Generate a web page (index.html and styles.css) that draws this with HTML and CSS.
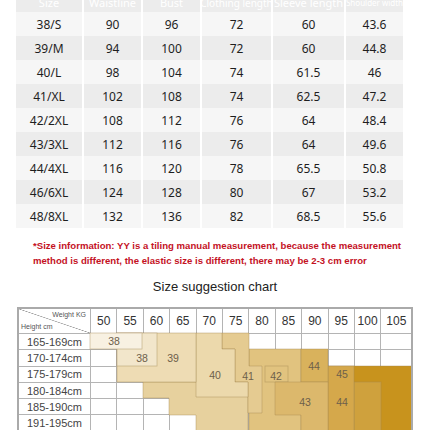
FILE: index.html
```html
<!DOCTYPE html>
<html lang="en">
<head>
    <meta charset="UTF-8">
    <meta name="viewport" content="width=device-width, initial-scale=1.0">
    <title>Size chart</title>
    <link rel="stylesheet" href="styles.css">
</head>
<body>
    <div class="size-table">
        <div class="row head">
            <div>Size</div><div>Waistline</div><div>Bust</div><div class="narrow">Clothing length</div><div>Sleeve length</div><div class="tiny">Shoulder width</div>
        </div>
        <div class="row"><div>38/S</div><div>90</div><div>96</div><div>72</div><div>60</div><div>43.6</div></div>
        <div class="row"><div>39/M</div><div>94</div><div>100</div><div>72</div><div>60</div><div>44.8</div></div>
        <div class="row"><div>40/L</div><div>98</div><div>104</div><div>74</div><div>61.5</div><div>46</div></div>
        <div class="row"><div>41/XL</div><div>102</div><div>108</div><div>74</div><div>62.5</div><div>47.2</div></div>
        <div class="row"><div>42/2XL</div><div>108</div><div>112</div><div>76</div><div>64</div><div>48.4</div></div>
        <div class="row"><div>43/3XL</div><div>112</div><div>116</div><div>76</div><div>64</div><div>49.6</div></div>
        <div class="row"><div>44/4XL</div><div>116</div><div>120</div><div>78</div><div>65.5</div><div>50.8</div></div>
        <div class="row"><div>46/6XL</div><div>124</div><div>128</div><div>80</div><div>67</div><div>53.2</div></div>
        <div class="row"><div>48/8XL</div><div>132</div><div>136</div><div>82</div><div>68.5</div><div>55.6</div></div>
    </div>

    <p class="note">*Size information: YY is a tiling manual measurement, because the measurement<br>method is different, the elastic size is different, there may be 2-3 cm error</p>

    <h2 class="chart-title">Size suggestion chart</h2>

    <div class="fit-chart">
        <div class="corner"><span class="w">Weight KG</span><span class="h">Height cm</span></div>
        <div>50</div><div>55</div><div>60</div><div>65</div><div>70</div><div>75</div><div>80</div><div>85</div><div>90</div><div>95</div><div>100</div><div>105</div>

        <div class="label">165-169cm</div><div></div><div></div><div></div><div></div><div></div><div></div><div></div><div></div><div></div><div></div><div></div><div></div>
        <div class="label">170-174cm</div><div></div><div></div><div></div><div></div><div></div><div></div><div></div><div></div><div></div><div></div><div></div><div></div>
        <div class="label">175-179cm</div><div></div><div></div><div></div><div></div><div></div><div></div><div></div><div></div><div></div><div></div><div></div><div></div>
        <div class="label">180-184cm</div><div></div><div></div><div></div><div></div><div></div><div></div><div></div><div></div><div></div><div></div><div></div><div></div>
        <div class="label">185-190cm</div><div></div><div></div><div></div><div></div><div></div><div></div><div></div><div></div><div></div><div></div><div></div><div></div>
        <div class="label">191-195cm</div><div></div><div></div><div></div><div></div><div></div><div></div><div></div><div></div><div></div><div></div><div></div><div></div>

        <!-- zones drawn in page coordinates, darkest first -->
        <svg class="zones" width="392" height="125" viewBox="19 309 392 125">
            <g stroke="#a48853" stroke-opacity="0.5" stroke-width="0.8">
                <rect x="328" y="366" width="84" height="80" fill="#c8931d"/>
                <rect x="354" y="382" width="27" height="64" fill="#cfa13d"/>
                <rect x="328" y="366" width="26" height="80" fill="#d5a84b"/>
                <rect x="249" y="349" width="52" height="97" fill="#e1c37f"/>
                <rect x="265" y="366" width="23" height="16" fill="none"/>
                <rect x="301" y="349" width="27" height="33" fill="#d9b25c"/>
                <polygon points="275,382 328,382 328,446 301,446 301,415 275,415" fill="#dcb86c"/>
                <polygon points="143,382 248,382 248,446 196,446 196,415 169,415 169,398 143,398" fill="#e7d19e"/>
                <polygon points="222,333 249,333 249,366 262,366 262,413 248,413 248,382 235,382 235,349 222,349" fill="#e5cb91"/>
                <polygon points="196,333 222,333 222,349 235,349 235,382 248,382 248,397 196,397" fill="#ecd9ac"/>
                <rect x="117" y="333" width="79" height="49" fill="#eedcb4"/>
                <rect x="117" y="333" width="40" height="33" fill="#f2e6cb"/>
                <rect x="90" y="333" width="52" height="16" fill="#f8f1e2"/>
            </g>
            <g class="zone-num">
                <text x="114" y="341">38</text>
                <text x="142" y="358">38</text>
                <text x="173" y="358">39</text>
                <text x="215" y="375">40</text>
                <text x="248" y="376">41</text>
                <text x="276" y="376">42</text>
                <text x="305" y="402">43</text>
                <text x="314" y="366">44</text>
                <text x="342" y="374">45</text>
                <text x="342" y="402">44</text>
            </g>
        </svg>
    </div>
</body>
</html>
```

FILE: styles.css
```css
body {
    margin: 0;
    height: 430px;
    overflow: hidden;
    background: #fff;
    font-family: "Noto Sans", "Noto Sans CJK SC", sans-serif;
}

/* top measurement table */
.size-table {
    margin: -12px 0 0 16px;
}

.size-table .row {
    display: grid;
    grid-template-columns: 66px 57px 57px 69px 71px 57px;
    column-gap: 2px;
    height: 24px;
}

.size-table .row div {
    display: flex;
    align-items: center;
    justify-content: center;
    background: #f6f6f6;
    color: #1e1e1e;
    font-size: 12px;
    white-space: nowrap;
    overflow: hidden;
}

.size-table .row:nth-child(odd) div {
    background: #ececec;
}

.size-table .head div {
    background: #000;
    color: #fff;
    font-size: 11px;
    padding-top: 5px;
    box-sizing: border-box;
}

.size-table .head .narrow {
    font-size: 10px;
}

.size-table .head .tiny {
    font-size: 8px;
}

/* red note */
.note {
    margin: 10px 0 0 33px;
    color: #c4121f;
    font: bold 9.6px/15px "Liberation Sans", sans-serif;
    white-space: nowrap;
}

.chart-title {
    margin: 10px 0 0;
    text-align: center;
    font: normal 13px/18px "Liberation Sans", sans-serif;
    color: #222;
}

/* weight / height chart */
.fit-chart {
    position: relative;
    width: max-content;
    margin: 11px 0 0 17px;
    display: grid;
    grid-template-columns: 71px repeat(11, 25.4px) 30px;
    grid-template-rows: 24px repeat(6, 15.3px);
    gap: 1px;
    background: #b4b4b4;
    border: 2px solid #aaa;
}

.fit-chart > div {
    display: flex;
    align-items: center;
    justify-content: center;
    background: #fff;
    color: #333;
    font: 12px "Liberation Sans", sans-serif;
}

.fit-chart > .label {
    font-size: 11px;
    color: #444;
}

.fit-chart > .corner {
    flex-direction: column;
    align-items: stretch;
    justify-content: space-between;
    padding: 2px 4px 3px 2px;
    font-size: 7px;
    color: #555;
    background: linear-gradient(to top right, #fff calc(50% - 0.6px), #999 50%, #fff calc(50% + 0.6px));
}

.corner .w {
    text-align: right;
}

.zones {
    position: absolute;
    left: 0;
    top: 0;
    pointer-events: none;
}

.zone-num text {
    font: 10.5px "Liberation Sans", sans-serif;
    fill: #6d604a;
    text-anchor: middle;
    dominant-baseline: central;
}
```
